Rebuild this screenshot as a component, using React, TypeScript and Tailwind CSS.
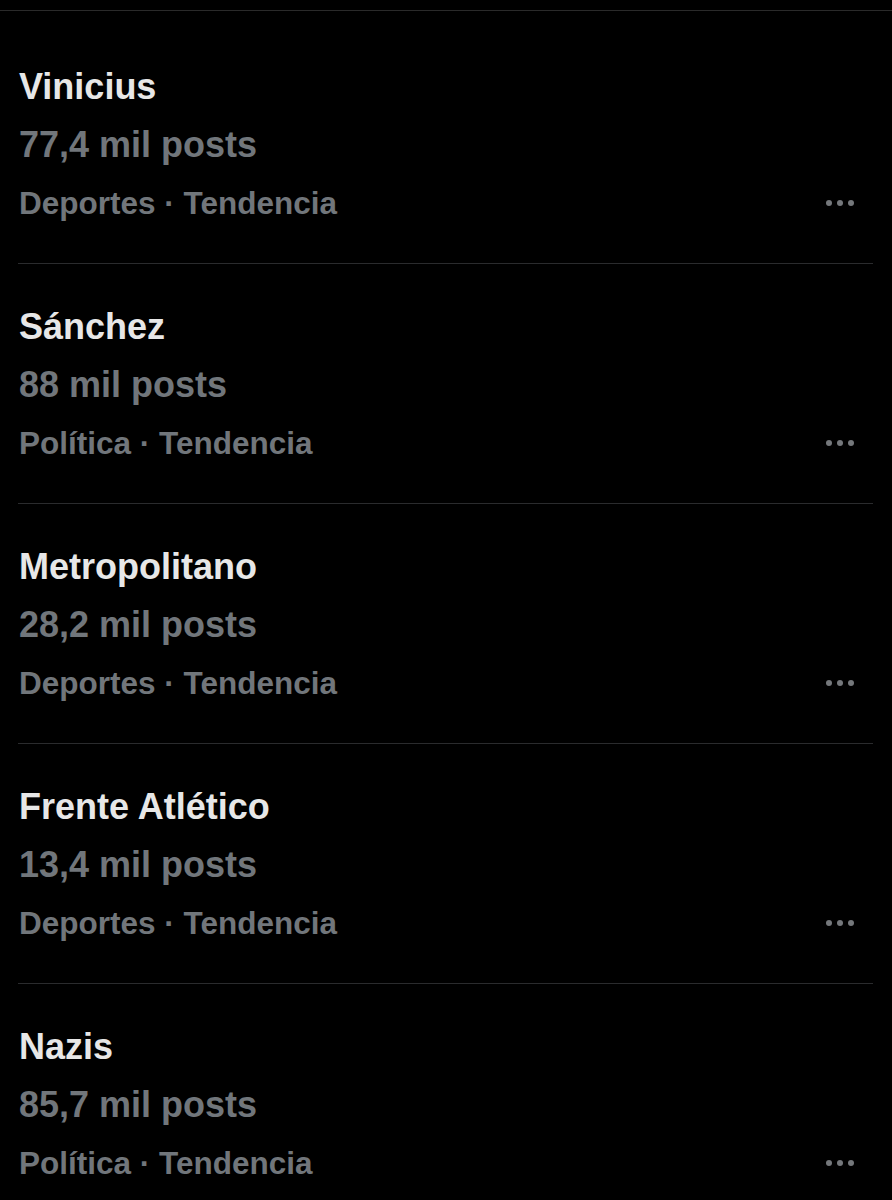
import React from 'react'

const trends = [
  { name: 'Vinicius', posts: '77,4 mil posts', cat: 'Deportes' },
  { name: 'Sánchez', posts: '88 mil posts', cat: 'Política' },
  { name: 'Metropolitano', posts: '28,2 mil posts', cat: 'Deportes' },
  { name: 'Frente Atlético', posts: '13,4 mil posts', cat: 'Deportes' },
  { name: 'Nazis', posts: '85,7 mil posts', cat: 'Política' },
]

const Dots = () => (
  <div className="flex items-center gap-[5px] mr-[38px]">
    <span className="block w-[6px] h-[6px] rounded-full bg-[#74777b]" />
    <span className="block w-[6px] h-[6px] rounded-full bg-[#74777b]" />
    <span className="block w-[6px] h-[6px] rounded-full bg-[#74777b]" />
  </div>
)

const App = () => {
  return (
    <div
      className="bg-black min-h-screen w-full overflow-hidden"
      style={{ fontFamily: '"Liberation Sans", Arial, sans-serif' }}
    >
      <div className="h-[10px]" />
      <div className="h-px bg-[#2a2a2a]" />
      <div className="h-[13px]" />
      {trends.map((t, i) => (
        <div key={i}>
          <div className="pl-[19px] pt-[34px] pb-[31px]">
            <div className="text-[36px] leading-[58px] font-bold text-[#e7e7e7]">{t.name}</div>
            <div className="text-[36px] leading-[58px] font-bold text-[#71767b]">{t.posts}</div>
            <div className="flex items-center justify-between">
              <div className="text-[31.5px] leading-[58px] font-bold text-[#71767b]">
                {t.cat} · Tendencia
              </div>
              <Dots />
            </div>
          </div>
          <div className="ml-[18px] mr-[19px] h-px bg-[#2a2b2d]" />
        </div>
      ))}
    </div>
  )
}

export default App
